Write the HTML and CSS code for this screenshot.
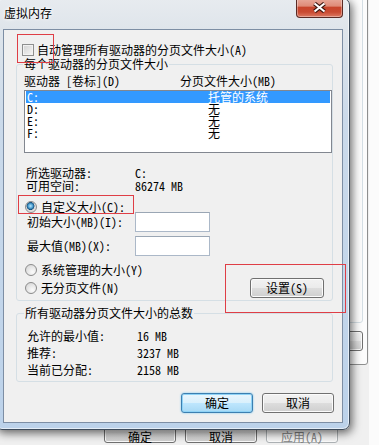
FILE: index.html
```html
<!DOCTYPE html>
<html lang="zh-CN">
<head>
  <meta charset="UTF-8">
  <title>虚拟内存</title>
  <link rel="stylesheet" href="styles.css">
</head>
<body>

  <!-- the owner window (性能选项) sits behind the dialog -->
  <div class="owner">
    <div class="owner-page">
      <div class="owner-group"></div>
      <div class="btn owner-btn"></div>
    </div>
    <div class="owner-buttons">
      <span class="btn owner-push">确定</span>
      <span class="btn owner-push">取消</span>
      <span class="btn owner-push off">应用(A)</span>
    </div>
  </div>

  <div class="dialog">
    <div class="caption">
      <span class="caption-title">虚拟内存</span>
      <span class="close-btn">
        <svg width="15" height="11" viewBox="0 0 15 11">
          <path d="M2.5 1.5 L12.5 9.5 M12.5 1.5 L2.5 9.5" stroke="#3b1610" stroke-width="4.2" fill="none"/>
          <path d="M2.5 1.5 L12.5 9.5 M12.5 1.5 L2.5 9.5" stroke="#fff" stroke-width="2.2" fill="none"/>
        </svg>
      </span>
    </div>

    <div class="client">
      <label class="check-row">
        <span class="checkbox"></span>自动管理所有驱动器的分页文件大小(A)
      </label>

      <fieldset class="group group-drives">
        <legend>每个驱动器的分页文件大小</legend>

        <div class="list-head">
          <span class="col-drive">驱动器 [卷标](D)</span>
          <span>分页文件大小(MB)</span>
        </div>
        <div class="listbox">
          <div class="list-row selected"><span class="col-drive">C:</span><span>托管的系统</span></div>
          <div class="list-row"><span class="col-drive">D:</span><span>无</span></div>
          <div class="list-row"><span class="col-drive">E:</span><span>无</span></div>
          <div class="list-row"><span class="col-drive">F:</span><span>无</span></div>
        </div>

        <div class="info-row first"><span class="info-label">所选驱动器:</span><span>C:</span></div>
        <div class="info-row"><span class="info-label">可用空间:</span><span>86274 MB</span></div>

        <label class="radio-row custom"><span class="radio checked"></span>自定义大小(C):</label>
        <div class="field-row first"><span class="field-label">初始大小(MB)(I):</span><span class="textbox"></span></div>
        <div class="field-row"><span class="field-label">最大值(MB)(X):</span><span class="textbox"></span></div>

        <div class="option-row">
          <div class="option-col">
            <label class="radio-row"><span class="radio"></span>系统管理的大小(Y)</label>
            <label class="radio-row"><span class="radio"></span>无分页文件(N)</label>
          </div>
          <span class="btn btn-set">设置(S)</span>
        </div>
      </fieldset>

      <fieldset class="group group-total">
        <legend>所有驱动器分页文件大小的总数</legend>
        <div class="total-row first"><span class="total-label">允许的最小值:</span><span>16 MB</span></div>
        <div class="total-row"><span class="total-label">推荐:</span><span>3237 MB</span></div>
        <div class="total-row"><span class="total-label">当前已分配:</span><span>2158 MB</span></div>
      </fieldset>

      <div class="dialog-buttons">
        <span class="btn btn-default">确定</span>
        <span class="btn">取消</span>
      </div>
    </div>
  </div>

  <!-- red annotation boxes drawn over the screenshot -->
  <div class="mark mark-1"></div>
  <div class="mark mark-2"></div>
  <div class="mark mark-3"></div>

</body>
</html>
```

FILE: styles.css
```css
html, body {
	margin: 0;
	height: 100%;
}

body {
	position: relative;
	overflow: hidden;
	background: #fbfbfb;
	color: #000;
	font: 12px/12px "Noto Sans Mono CJK SC", "Noto Sans CJK SC", monospace;
}

/* ---------- owner window behind ---------- */

.owner {
	position: absolute;
	left: -40px;
	top: -40px;
	width: 409px;
	height: 500px;
	background: #f0f0f0;
}

.owner-page {
	box-sizing: border-box;
	width: 408px;
	height: 405px;
	padding-right: 4px;
	border: 1px solid #8e8f8f;
	border-radius: 0 0 3px 0;
	background: #fcfcfc;
	display: flex;
	flex-direction: column;
	align-items: flex-end;
}

.owner-group {
	box-sizing: border-box;
	width: 200px;
	height: 362px;
	border: 1px solid #d5dfe5;
	border-radius: 3px;
}

.owner-btn {
	width: 75px;
	height: 20px;
	margin-top: 8px;
}

.owner-buttons {
	display: flex;
	gap: 9px;
	margin-top: 55px;
	padding-left: 144px;
}

.owner-push {
	width: 72px;
	height: 23px;
	padding-top: 7px;
	line-height: 14px;
}

.owner-push.off {
	border-color: #adb2b5;
	background: #f4f4f4;
	color: #838383;
}

/* ---------- dialog frame ---------- */

.dialog {
	position: absolute;
	left: -5px;
	top: -2px;
	width: 355px;
	height: 432px;
	box-sizing: border-box;
	padding: 0 6px 6px 7px;
	border: 1px solid #3e4c5c;
	border-radius: 7px;
	background: linear-gradient(to bottom, #e7ebef 0, #dfe5eb 30px, #cbdaea 120px, #bcd2ea 100%);
	box-shadow: 2px 3px 10px rgba(0, 0, 0, .6), inset 0 0 0 1px rgba(255, 255, 255, .6);
	display: flex;
	flex-direction: column;
}

.caption {
	height: 30px;
	display: flex;
	justify-content: space-between;
	align-items: flex-start;
}

.caption-title {
	padding: 8px 0 0 1px;
	font-family: "Noto Sans CJK SC", sans-serif;
	text-shadow: 0 0 5px #fff, 0 0 3px #fff;
}

.close-btn {
	box-sizing: border-box;
	width: 47px;
	height: 21px;
	margin-top: -2px;
	border: 1px solid #5a2a24;
	border-top: none;
	border-radius: 0 0 4px 4px;
	background: linear-gradient(to bottom, #eab1a4 0%, #df8b78 45%, #c8452c 52%, #c94a31 75%, #dc7a63 100%);
	box-shadow: inset 0 0 0 1px rgba(255, 255, 255, .35);
	display: flex;
	align-items: center;
	justify-content: center;
}

.client {
	box-sizing: border-box;
	height: 394px;
	padding: 13px 0 0 12px;
	border: 1px solid #7d8ea4;
	background: #f0f0f0;
}

/* ---------- controls ---------- */

.check-row, .radio-row {
	display: flex;
	align-items: center;
}

.check-row {
	height: 13px;
	margin-left: 6px;
}

.checkbox {
	box-sizing: border-box;
	width: 12px;
	height: 12px;
	margin-right: 3px;
	border: 1px solid #8e8f8f;
	background: linear-gradient(135deg, #d2d2d2, #f6f6f6);
	box-shadow: inset 0 0 0 1px #f2f2f2;
}

.radio {
	box-sizing: border-box;
	width: 12px;
	height: 12px;
	margin-right: 4px;
	border: 1px solid #8b8b8b;
	border-radius: 50%;
	background: radial-gradient(circle at 65% 70%, #fbfbfb 0, #dedede 70%, #cfcfcf 100%);
}

.radio.checked {
	background: radial-gradient(circle at 45% 40%, #b8e6fb 0, #4d9fd1 28%, #134f7d 45%, #d9d9d9 52%, #ececec 100%);
}

.group {
	box-sizing: border-box;
	width: 317px;
	min-width: 0;
	margin: 0;
	padding: 0;
	border: 1px solid #d5dfe5;
	border-radius: 3px;
}

.group legend {
	margin-left: 6px;
	padding: 0 1px;
	line-height: 12px;
}

.group-drives {
	margin-top: 2px;
	padding-bottom: 2px;
}

.list-head {
	display: flex;
	height: 12px;
	margin: 5px 0 0 7px;
}

.list-head .col-drive {
	width: 156px;
}

.listbox {
	box-sizing: border-box;
	width: 308px;
	height: 63px;
	margin: 3px 0 0 7px;
	padding: 0 1px;
	border: 1px solid #828790;
	background: #fff;
}

.list-row {
	display: flex;
	height: 12px;
	padding-left: 1px;
}

.list-row .col-drive {
	width: 181px;
}

.list-row.selected {
	background: #3399ff;
	color: #fff;
}

.info-row {
	display: flex;
	height: 13px;
	line-height: 13px;
	margin-left: 9px;
}

.info-row.first {
	margin-top: 13px;
}

.info-label {
	width: 109px;
}

.radio-row {
	height: 12px;
}

.radio-row.custom {
	margin: 9px 0 0 8px;
}

.field-row {
	display: flex;
	align-items: center;
	height: 20px;
	margin: 4px 0 0 10px;
}

.field-row.first {
	margin-top: -1px;
}

.field-label {
	width: 108px;
}

.textbox {
	box-sizing: border-box;
	width: 75px;
	height: 20px;
	border: 1px solid #abb8c8;
	border-top-color: #9aa6b4;
	background: #fff;
}

.option-row {
	display: flex;
	justify-content: space-between;
	margin-top: 8px;
}

.option-col {
	margin-left: 8px;
}

.option-col .radio-row + .radio-row {
	margin-top: 6px;
}

.group-total {
	margin-top: 6px;
	padding-bottom: 3px;
}

.group-total legend {
	margin-left: 7px;
}

.total-row {
	display: flex;
	height: 17px;
	line-height: 17px;
	margin-left: 10px;
}

.total-row.first {
	margin-top: 8px;
}

.total-label {
	width: 110px;
}

/* ---------- push buttons ---------- */

.btn {
	box-sizing: border-box;
	display: block;
	border: 1px solid #707070;
	border-radius: 3px;
	background: linear-gradient(to bottom, #f2f2f2 0%, #ebebeb 49%, #dddddd 51%, #cfcfcf 100%);
	box-shadow: inset 0 0 0 1px #fbfbfb;
	text-align: center;
	line-height: 18px;
}

.btn-set {
	width: 74px;
	height: 20px;
	margin: 14px 8px 0 0;
}

.dialog-buttons {
	display: flex;
	justify-content: flex-end;
	gap: 9px;
	margin-top: 11px;
	padding-right: 8px;
}

.dialog-buttons .btn {
	width: 72px;
	height: 20px;
}

.btn-default {
	border-color: #3c7fb1;
	background: linear-gradient(to bottom, #eaf6fd 0%, #d9f0fc 49%, #bee6fd 51%, #a7d9f5 100%);
	box-shadow: inset 0 0 0 1px #8fd3f6, 0 0 2px #6cc4f0;
}

/* ---------- red annotation boxes ---------- */

.mark {
	position: absolute;
	box-sizing: border-box;
	border: 1px solid #df3e46;
}

.mark-1 {
	left: 17px;
	top: 34px;
	width: 37px;
	height: 29px;
}

.mark-2 {
	left: 18px;
	top: 195px;
	width: 116px;
	height: 19px;
}

.mark-3 {
	left: 225px;
	top: 264px;
	width: 121px;
	height: 49px;
}
```
